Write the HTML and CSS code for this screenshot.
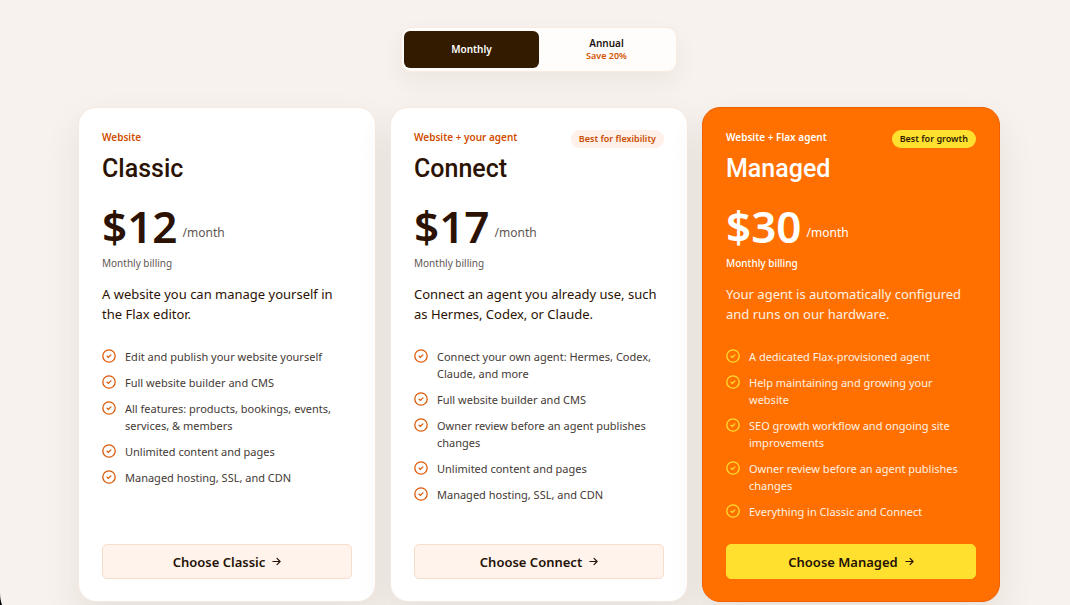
FILE: index.html
```html
<!DOCTYPE html>
<html lang="en">
<head>
<meta charset="utf-8">
<meta name="viewport" content="width=device-width, initial-scale=1">
<title>Flax pricing</title>
<link rel="stylesheet" href="styles.css">
</head>
<body>
<svg class="sprite" aria-hidden="true">
  <symbol id="check" viewBox="0 0 14 14">
    <circle cx="7" cy="7" r="6.2"/>
    <path d="M5.1 7.2l1.3 1.2 2.5-2.5"/>
  </symbol>
  <symbol id="arrow" viewBox="0 0 10 10">
    <path d="M1 5h8M5.6 1.6L9 5 5.6 8.4"/>
  </symbol>
</svg>
<main class="pricing">
  <div class="toggle" role="group" aria-label="Billing period">
    <button class="period period-active" type="button" aria-pressed="true">Monthly</button>
    <button class="period" type="button" aria-pressed="false">Annual<span class="saving">Save 20%</span></button>
  </div>
  <div class="plans">
    <article class="card">
      <header class="card-head">
        <div><p class="kind">Website</p><h2 class="name">Classic</h2></div>
      </header>
      <p class="price"><strong class="amount">$12</strong><span class="per">/month</span></p>
      <p class="billing">Monthly billing</p>
      <p class="summary">A website you can manage yourself in the Flax editor.</p>
      <ul class="features">
        <li class="feature"><svg class="check"><use href="#check"/></svg>Edit and publish your website yourself</li>
        <li class="feature"><svg class="check"><use href="#check"/></svg>Full website builder and CMS</li>
        <li class="feature"><svg class="check"><use href="#check"/></svg>All features: products, bookings, events, services, &amp; members</li>
        <li class="feature"><svg class="check"><use href="#check"/></svg>Unlimited content and pages</li>
        <li class="feature"><svg class="check"><use href="#check"/></svg>Managed hosting, SSL, and CDN</li>
      </ul>
      <button class="choose" type="button">Choose Classic<svg class="arrow"><use href="#arrow"/></svg></button>
    </article>
    <article class="card">
      <header class="card-head">
        <div><p class="kind">Website + your agent</p><h2 class="name">Connect</h2></div>
        <span class="badge">Best for flexibility</span>
      </header>
      <p class="price"><strong class="amount">$17</strong><span class="per">/month</span></p>
      <p class="billing">Monthly billing</p>
      <p class="summary">Connect an agent you already use, such as Hermes, Codex, or Claude.</p>
      <ul class="features">
        <li class="feature"><svg class="check"><use href="#check"/></svg>Connect your own agent: Hermes, Codex, Claude, and more</li>
        <li class="feature"><svg class="check"><use href="#check"/></svg>Full website builder and CMS</li>
        <li class="feature"><svg class="check"><use href="#check"/></svg>Owner review before an agent publishes changes</li>
        <li class="feature"><svg class="check"><use href="#check"/></svg>Unlimited content and pages</li>
        <li class="feature"><svg class="check"><use href="#check"/></svg>Managed hosting, SSL, and CDN</li>
      </ul>
      <button class="choose" type="button">Choose Connect<svg class="arrow"><use href="#arrow"/></svg></button>
    </article>
    <article class="card card-managed">
      <header class="card-head">
        <div><p class="kind">Website + Flax agent</p><h2 class="name">Managed</h2></div>
        <span class="badge">Best for growth</span>
      </header>
      <p class="price"><strong class="amount">$30</strong><span class="per">/month</span></p>
      <p class="billing">Monthly billing</p>
      <p class="summary">Your agent is automatically configured and runs on our hardware.</p>
      <ul class="features">
        <li class="feature"><svg class="check"><use href="#check"/></svg>A dedicated Flax-provisioned agent</li>
        <li class="feature"><svg class="check"><use href="#check"/></svg>Help maintaining and growing your website</li>
        <li class="feature"><svg class="check"><use href="#check"/></svg>SEO growth workflow and ongoing site improvements</li>
        <li class="feature"><svg class="check"><use href="#check"/></svg>Owner review before an agent publishes changes</li>
        <li class="feature"><svg class="check"><use href="#check"/></svg>Everything in Classic and Connect</li>
      </ul>
      <button class="choose" type="button">Choose Managed<svg class="arrow"><use href="#arrow"/></svg></button>
    </article>
  </div>
</main>
<svg class="window-corner" viewBox="0 0 2 13" aria-hidden="true"><path d="M0 0Q0 8 2 13H0z"/></svg>
</body>
</html>
```
FILE: styles.css
```css
* { box-sizing: border-box; }
body {
  margin: 0;
  background: #f7f2ee;
  color: #2b1203;
  font-family: "Noto Sans", sans-serif;
}
h2, p, ul { margin: 0; padding: 0; }
button { font-family: inherit; cursor: pointer; }
.sprite { display: none; }
.window-corner {
  position: fixed;
  bottom: 0;
  left: 0;
  width: 2px;
  height: 13px;
  fill: #000;
}
.pricing {
  display: flex;
  flex-direction: column;
  align-items: center;
  gap: 35px;
  padding: 27px 70px 3px 78px;
}
.toggle {
  display: grid;
  grid-template-columns: 1fr 1fr;
  width: 276px;
  padding: 3px 2px;
  border: 1px solid #f9ebe0;
  border-radius: 10px;
  background: #fefdfc;
  box-shadow: 0 10px 24px rgba(80, 45, 15, 0.06);
}
.period {
  display: flex;
  flex-direction: column;
  align-items: center;
  justify-content: center;
  height: 37px;
  padding: 0;
  border: 0;
  border-radius: 6px;
  background: transparent;
  color: #1d1511;
  font-size: 10px;
  font-weight: 600;
  line-height: 13px;
}
.period-active { background: #331b00; color: #fff; }
.saving { color: #d35400; font-size: 9px; line-height: 12px; }
.plans {
  display: grid;
  grid-template-columns: repeat(3, 1fr);
  gap: 14px;
  width: 100%;
}
.card {
  display: flex;
  flex-direction: column;
  padding: 22px 23px;
  border: 1px solid #f6e9df;
  border-radius: 18px;
  background: #fff;
  box-shadow: 0 16px 36px rgba(80, 45, 15, 0.09);
}
.card-head {
  display: flex;
  justify-content: space-between;
  align-items: flex-start;
}
.kind { color: #d04e00; font-size: 10px; font-weight: 600; line-height: 14px; }
.name {
  margin-top: 9px;
  font-family: Roboto, sans-serif;
  font-size: 25px;
  font-weight: 500;
  line-height: 32px;
}
.badge {
  padding: 3px 8px;
  border-radius: 9px;
  background: #fff0e9;
  color: #c94d00;
  font-size: 9px;
  font-weight: 600;
  line-height: 12px;
}
.price { display: flex; align-items: flex-end; gap: 5px; margin-top: 20px; }
.amount { font-size: 44px; font-weight: 600; line-height: 42px; }
.per { color: #5e5753; font-size: 12px; line-height: 28px; }
.billing { margin-top: 9px; color: #5e5753; font-size: 10px; line-height: 14px; }
.summary { margin-top: 14px; font-size: 13px; line-height: 20px; }
.features {
  display: flex;
  flex-direction: column;
  gap: 9px;
  margin: 24px 0;
  padding-right: 4px;
  list-style: none;
}
.feature { display: flex; gap: 9px; color: #443a35; font-size: 11px; line-height: 17px; }
.check {
  flex: none;
  width: 14px;
  height: 14px;
  margin-top: 1px;
  fill: none;
  stroke: #db5a08;
  stroke-width: 1.3;
  stroke-linecap: round;
}
.choose {
  display: flex;
  justify-content: center;
  align-items: center;
  gap: 7px;
  margin-top: auto;
  height: 35px;
  border: 1px solid #f8ddcb;
  border-radius: 5px;
  background: #fff3eb;
  color: #241105;
  font-size: 13px;
  font-weight: 600;
}
.arrow {
  width: 9px;
  height: 9px;
  fill: none;
  stroke: currentColor;
  stroke-width: 1.3;
  stroke-linecap: round;
  stroke-linejoin: round;
}
.card-managed { border-color: #f06000; background: #ff7000; color: #fff; }
.card-managed .kind,
.card-managed .per,
.card-managed .billing { color: #fff; }
.card-managed .billing { font-weight: 500; }
.card-managed .summary,
.card-managed .feature { color: #fff1e3; }
.card-managed .badge { background: #ffe02f; color: #331b00; }
.card-managed .check { stroke: #ffdc30; }
.card-managed .choose { border-color: #ffe02f; background: #ffe02f; }
@media (max-width: 860px) {
  .pricing { padding: 24px; }
  .plans { grid-template-columns: 1fr; }
}
```
